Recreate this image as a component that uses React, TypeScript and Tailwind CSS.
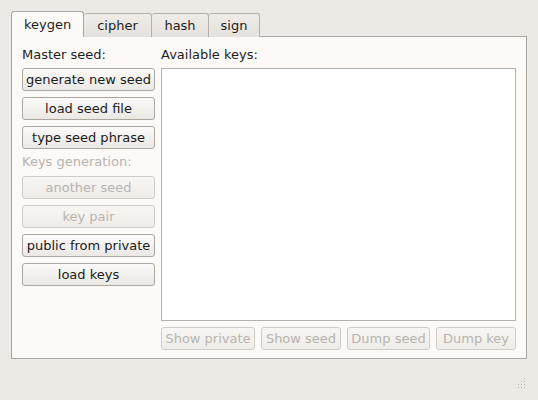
import React from 'react';

const Btn: React.FC<{ label: string; disabled?: boolean; className?: string }> = ({ label, disabled, className = '' }) => (
  <button
    disabled={disabled}
    className={`h-[23px] rounded-[3px] border text-[13px] leading-none whitespace-nowrap ${
      disabled
        ? 'border-[#d0ccc6] bg-gradient-to-b from-[#f8f6f3] to-[#efece8] text-[#b8b4af]'
        : 'border-[#aaa6a0] bg-gradient-to-b from-[#fcfbfa] to-[#ebe8e4] text-[#1a1a1a]'
    } ${className}`}
  >
    {label}
  </button>
);

const tabs = ['keygen', 'cipher', 'hash', 'sign'];

export default function App() {
  return (
    <div
      className="relative w-[538px] h-[400px] bg-[#edeae5] px-[11px] pt-[11px] text-[#1e1e1e]"
      style={{ fontFamily: '"DejaVu Sans", sans-serif' }}
    >
      {/* tab bar */}
      <div className="flex items-end h-[26px] text-[13px]">
        {tabs.map((t, i) =>
          i === 0 ? (
            <div
              key={t}
              className="relative z-10 h-[26px] w-[73px] flex items-center justify-center border border-b-0 border-[#aaa6a0] rounded-t-[3px] bg-[#fcf9f6]"
            >
              {t}
            </div>
          ) : (
            <div
              key={t}
              className="h-[24px] flex items-center justify-center border border-l-0 border-b-0 border-[#b4b0aa] rounded-t-[3px] bg-gradient-to-b from-[#f0ede9] to-[#e4e1dc]"
              style={{ width: [0, 68, 57, 51][i] }}
            >
              {t}
            </div>
          )
        )}
      </div>

      {/* panel */}
      <div className="-mt-px h-[323px] w-[516px] border border-[#aaa6a0] bg-[#fcf9f6] flex gap-[6px] pl-[10px] pr-[10px] pt-[8px] text-[13px]">
        <div className="w-[133px] flex flex-col">
          <div className="h-[23px] leading-[20px]">Master seed:</div>
          <div className="flex flex-col gap-[6px]">
            <Btn label="generate new seed" />
            <Btn label="load seed file" />
            <Btn label="type seed phrase" />
          </div>
          <div className="h-[27px] leading-[26px] text-[#b8b4af]">Keys generation:</div>
          <div className="flex flex-col gap-[6px]">
            <Btn label="another seed" disabled />
            <Btn label="key pair" disabled />
            <Btn label="public from private" />
            <Btn label="load keys" />
          </div>
        </div>
        <div className="flex-1 flex flex-col">
          <div className="h-[23px] leading-[20px]">Available keys:</div>
          <div className="h-[253px] border border-[#b4b0aa] bg-white" />
          <div className="mt-[6px] flex gap-[6px]">
            <Btn label="Show private" disabled className="w-[94px]" />
            <Btn label="Show seed" disabled className="w-[80px]" />
            <Btn label="Dump seed" disabled className="w-[83px]" />
            <Btn label="Dump key" disabled className="w-[80px]" />
          </div>
        </div>
      </div>

      {/* resize grip */}
      <svg className="absolute right-[12px] bottom-[12px]" width="10" height="10" viewBox="0 0 10 10">
        {[
          [8, 0], [8, 3], [5, 3], [8, 6], [5, 6], [2, 6], [8, 9], [5, 9], [2, 9], [-1, 9],
        ].map(([x, y], i) => (
          <rect key={i} x={x} y={y} width="1" height="1" fill="#b4b0aa" />
        ))}
      </svg>
    </div>
  );
}
